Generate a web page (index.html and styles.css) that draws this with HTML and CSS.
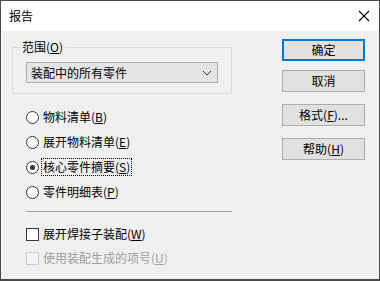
FILE: index.html
```html
<!DOCTYPE html>
<html lang="zh-CN">
<head>
<meta charset="UTF-8">
<title>报告</title>
<link rel="stylesheet" href="styles.css">
</head>
<body>
<div class="dlg">
  <div class="titlebar">
    <span class="title">报告</span>
    <svg class="close" width="12" height="12" viewBox="0 0 12 12"><path d="M1 1L11 11M11 1L1 11" stroke="#000" stroke-width="1.1" fill="none"/></svg>
  </div>
  <div class="main">
    <div class="left">
      <fieldset class="group">
        <legend>范围(<u>O</u>)</legend>
        <div class="combo">
          <span>装配中的所有零件</span>
          <svg width="10" height="6" viewBox="0 0 10 6"><path d="M1 1L5 5L9 1" stroke="#333" stroke-width="1" fill="none"/></svg>
        </div>
      </fieldset>
      <ul class="opts">
        <li><span class="radio"></span><span class="lbl">物料清单(<u>B</u>)</span></li>
        <li><span class="radio"></span><span class="lbl">展开物料清单(<u>E</u>)</span></li>
        <li><span class="radio on"></span><span class="lbl focus">核心零件摘要(<u>S</u>)</span></li>
        <li><span class="radio"></span><span class="lbl">零件明细表(<u>P</u>)</span></li>
      </ul>
      <div class="sep"></div>
      <ul class="checks">
        <li><span class="box"></span><span class="lbl">展开焊接子装配(<u>W</u>)</span></li>
        <li class="off"><span class="box"></span><span class="lbl">使用装配生成的项号(<u>U</u>)</span></li>
      </ul>
    </div>
    <div class="right">
      <div class="btn def">确定</div>
      <div class="btn">取消</div>
      <div class="btn spaced">格式(<u>F</u>)...</div>
      <div class="btn spaced">帮助(<u>H</u>)</div>
    </div>
  </div>
</div>
</body>
</html>
```

FILE: styles.css
```css
html,body{margin:0;padding:0;overflow:hidden;}
body{font:12px/16px "Noto Sans CJK SC","Noto Sans",sans-serif;color:#000;background:#fff;}
ul{margin:0;padding:0;list-style:none;}
u{text-decoration:underline;text-underline-offset:1px;}

.dlg{width:378px;height:278px;border:1px solid #4a4a4a;border-bottom-width:2px;background:#f0f0f0;}
.titlebar{height:30px;background:#fff;display:flex;align-items:center;justify-content:space-between;padding:0 10px 0 8px;}
.title{font-size:12px;}
.close{display:block;margin-right:-1px;}

.main{display:flex;}
.left{width:221px;padding-left:11px;}
.right{margin-left:49px;padding-top:8px;display:flex;flex-direction:column;}

.group{margin:8px 0 0;padding:7px 13px 10px;border:1px solid #dcdcdc;min-width:0;width:192px;}
.group legend{padding:0 2px;margin-left:-6px;line-height:16px;}
.combo{height:19px;border:1px solid #adadad;background:#e5e5e5;display:flex;align-items:center;justify-content:space-between;padding:0 5px 0 4px;}

.opts{margin-top:15px;padding-left:14px;display:flex;flex-direction:column;gap:9px;}
.opts li,.checks li{display:flex;align-items:center;height:16px;}
.radio{width:11px;height:11px;border:1px solid #333;border-radius:50%;background:#fff;position:relative;margin-right:3px;}
.radio.on::after{content:"";position:absolute;left:3px;top:3px;width:5px;height:5px;border-radius:50%;background:#333;}
.lbl{padding:0 1px;}
.focus{outline:1px dotted #000;}

.sep{margin:11px 0 0 14px;width:206px;border-top:1px solid #a0a0a0;}

.checks{margin-top:14px;padding-left:14px;display:flex;flex-direction:column;gap:8px;}
.box{width:11px;height:11px;border:1px solid #333;background:#fff;margin-right:3px;}
.checks .off .box{border-color:#cccccc;background:#f4f4f4;}
.checks .off .lbl{color:#a0a0a0;}

.btn{width:81px;height:20px;border:1px solid #adadad;background:#e1e1e1;display:flex;align-items:center;justify-content:center;}
.btn + .btn{margin-top:9px;}
.btn.spaced{margin-top:12px;}
.btn.def{border:2px solid #0078d7;width:79px;height:18px;}
```
